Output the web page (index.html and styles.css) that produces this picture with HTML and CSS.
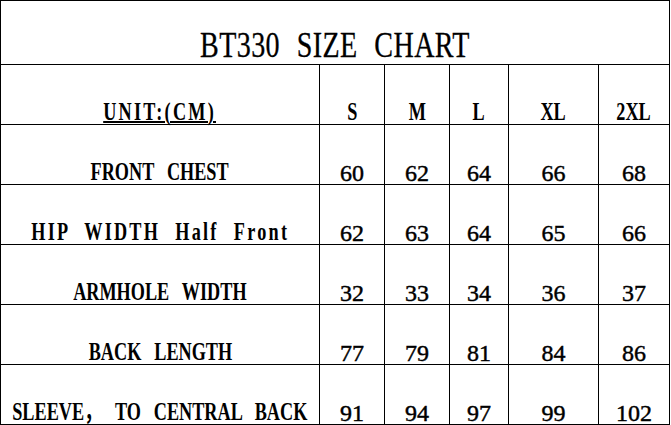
FILE: index.html
```html
<!DOCTYPE html>
<html lang="en">
<head>
<meta charset="utf-8">
<title>BT330 Size Chart</title>
<link rel="stylesheet" href="styles.css">
</head>
<body>
<div class="chart">
  <div class="cell title"><span class="title-text">BT330 SIZE CHART</span></div>

  <div class="cell"><span class="label wide unit">UNIT:(CM)</span></div>
  <div class="cell"><span class="label">S</span></div>
  <div class="cell"><span class="label">M</span></div>
  <div class="cell"><span class="label">L</span></div>
  <div class="cell"><span class="label">XL</span></div>
  <div class="cell"><span class="label">2XL</span></div>

  <div class="cell"><span class="label">FRONT CHEST</span></div>
  <div class="cell"><span class="num">60</span></div>
  <div class="cell"><span class="num">62</span></div>
  <div class="cell"><span class="num">64</span></div>
  <div class="cell"><span class="num">66</span></div>
  <div class="cell"><span class="num">68</span></div>

  <div class="cell"><span class="label wide">HIP WIDTH Half Front</span></div>
  <div class="cell"><span class="num">62</span></div>
  <div class="cell"><span class="num">63</span></div>
  <div class="cell"><span class="num">64</span></div>
  <div class="cell"><span class="num">65</span></div>
  <div class="cell"><span class="num">66</span></div>

  <div class="cell"><span class="label">ARMHOLE WIDTH</span></div>
  <div class="cell"><span class="num">32</span></div>
  <div class="cell"><span class="num">33</span></div>
  <div class="cell"><span class="num">34</span></div>
  <div class="cell"><span class="num">36</span></div>
  <div class="cell"><span class="num">37</span></div>

  <div class="cell"><span class="label">BACK LENGTH</span></div>
  <div class="cell"><span class="num">77</span></div>
  <div class="cell"><span class="num">79</span></div>
  <div class="cell"><span class="num">81</span></div>
  <div class="cell"><span class="num">84</span></div>
  <div class="cell"><span class="num">86</span></div>

  <div class="cell"><span class="label">SLEEVE， TO CENTRAL BACK</span></div>
  <div class="cell"><span class="num">91</span></div>
  <div class="cell"><span class="num">94</span></div>
  <div class="cell"><span class="num">97</span></div>
  <div class="cell"><span class="num">99</span></div>
  <div class="cell"><span class="num">102</span></div>
</div>
</body>
</html>
```

FILE: styles.css
```css
html, body {
  margin: 0;
  padding: 0;
  background: #fff;
}

.chart {
  display: grid;
  width: 670px;
  box-sizing: border-box;
  grid-template-columns: 318px 64px 64px 58px 89px 70px;
  grid-template-rows: 63px repeat(6, 59px);
  gap: 1px;
  padding: 1px;
  background: #000;
  color: #000;
  font-family: "Liberation Serif", "Noto Sans CJK SC", serif;
}

.cell {
  background: #fff;
  display: flex;
  justify-content: center;
  align-items: flex-end;
  overflow: visible;
}

.title {
  grid-column: 1 / -1;
}

.title-text {
  display: inline-block;
  white-space: nowrap;
  font-size: 36px;
  line-height: 37px;
  font-weight: normal;
  letter-spacing: 0.5px;
  word-spacing: 12px;
  -webkit-text-stroke: 0.3px #000;
  transform: scaleX(0.78);
}

.label {
  display: inline-block;
  white-space: nowrap;
  font-size: 26px;
  line-height: 24px;
  font-weight: bold;
  word-spacing: 12px;
  transform: scaleX(0.7);
}

.wide {
  letter-spacing: 3.2px;
}

.unit {
  text-decoration: underline;
  text-decoration-thickness: 2px;
  text-underline-offset: 1px;
}

.num {
  display: inline-block;
  white-space: nowrap;
  font-size: 24px;
  line-height: 22px;
  font-weight: normal;
  -webkit-text-stroke: 0.45px #000;
}
```
